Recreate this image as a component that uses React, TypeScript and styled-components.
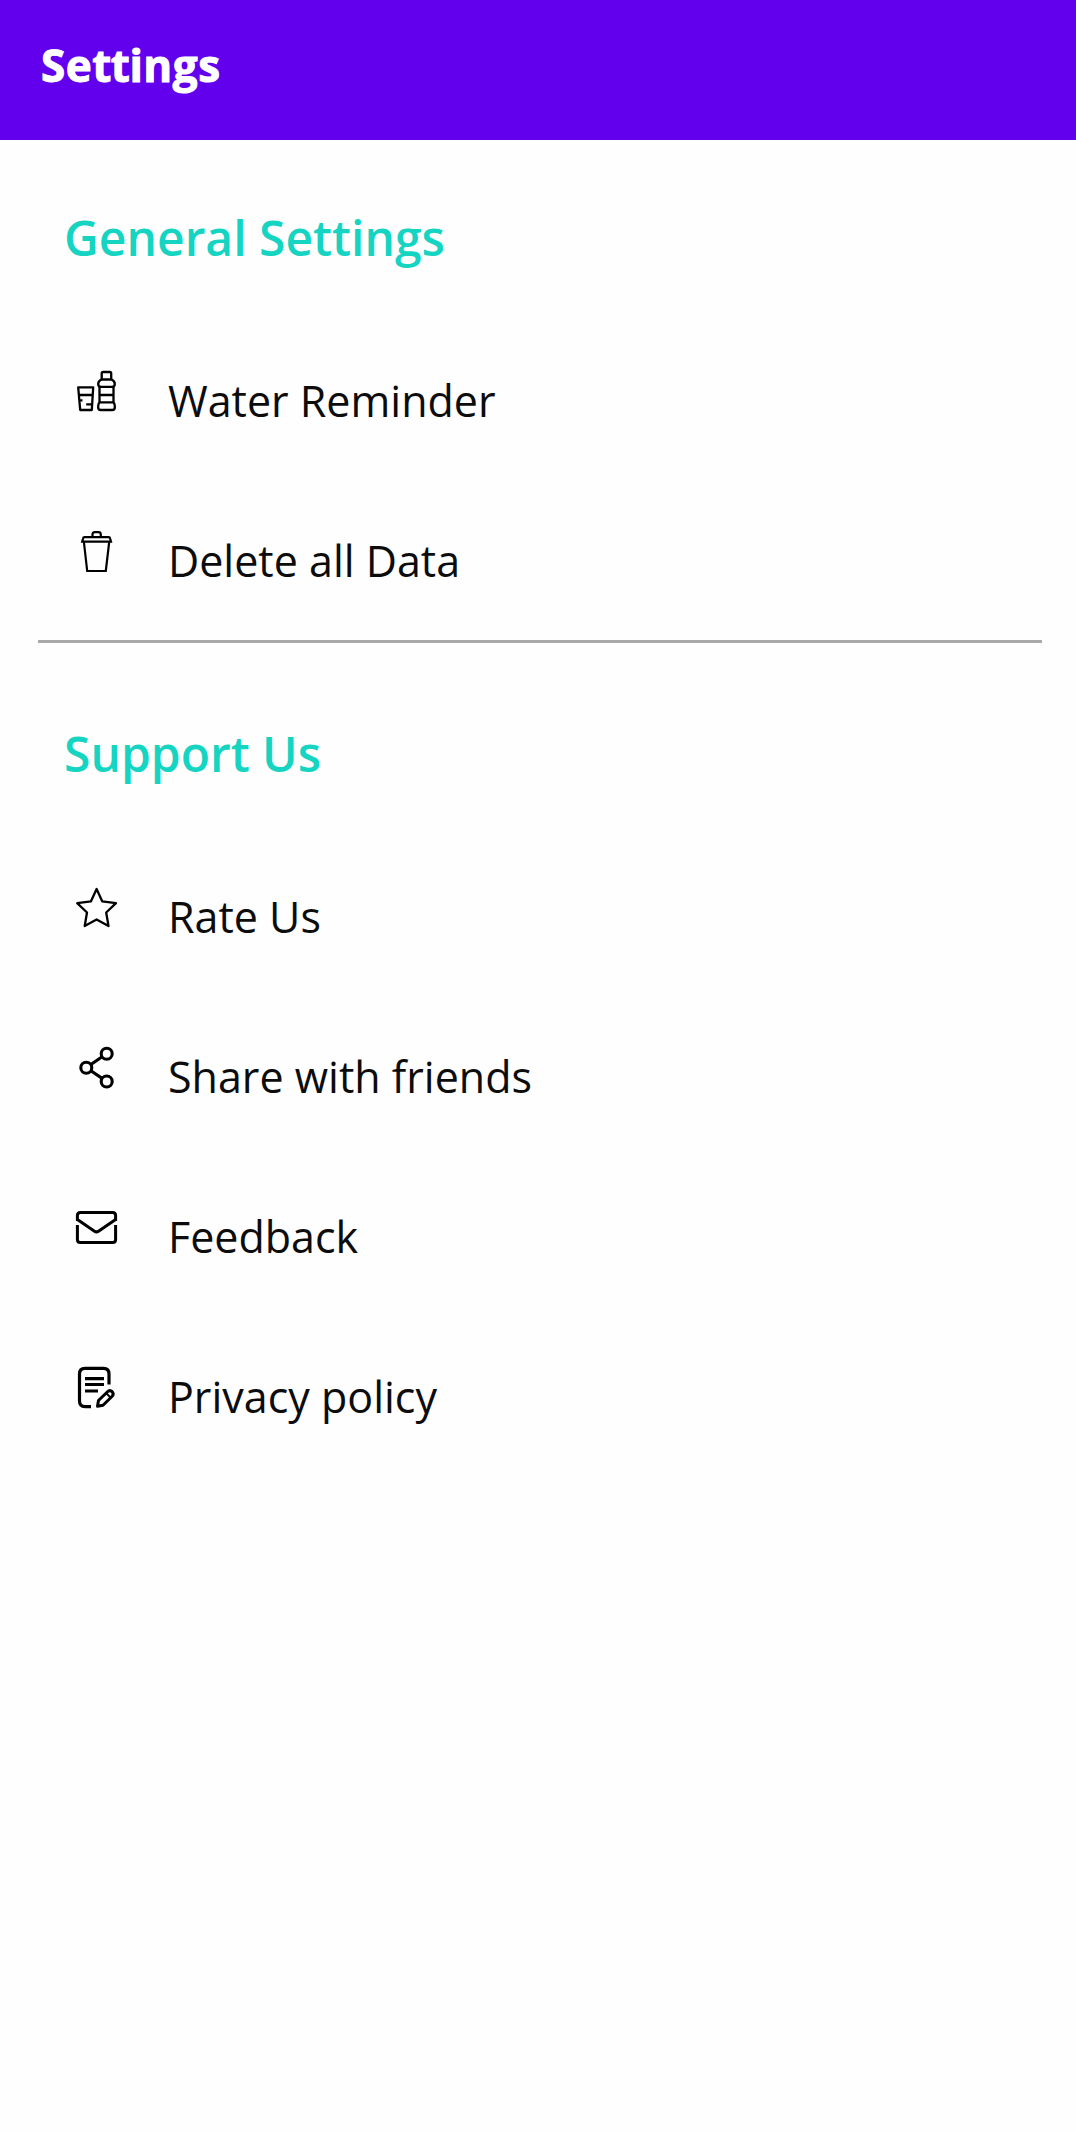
import React from 'react';
import styled, { createGlobalStyle } from 'styled-components';

const GlobalStyle = createGlobalStyle`
  *, *::before, *::after { box-sizing: border-box; }
  body {
    margin: 0;
    background: #fefefe;
    font-family: 'Open Sans', 'Noto Sans', sans-serif;
  }
`;

const Screen = styled.div`
  display: flex;
  flex-direction: column;
  min-height: 2132px;
`;

const AppBar = styled.header`
  display: flex;
  align-items: center;
  height: 140px;
  padding: 0 41px 11px;
  background: #6200ee;
`;

const Title = styled.h1`
  margin: 0;
  color: #fff;
  font-size: 44px;
  font-weight: 700;
  line-height: 60px;
  letter-spacing: 0.5px;
  -webkit-text-stroke: 1px #fff;
`;

const JoinedPair = styled.span`
  letter-spacing: -0.5px;
`;

const SectionTitle = styled.h2`
  height: 172px;
  margin: 0;
  padding: 66px 64px 0;
  color: #15d5c2;
  font-size: 48px;
  font-weight: 600;
  line-height: 64px;
`;

const List = styled.ul`
  margin: 0;
  padding: 0;
  list-style: none;
`;

const Row = styled.li`
  display: flex;
  align-items: flex-start;
  gap: 47px;
  height: 160px;
  padding: 56px 73px 0;
`;

const Icon = styled.svg`
  flex: none;
  width: 48px;
  height: 48px;
  fill: none;
  stroke: #000;
`;

const Label = styled.span`
  margin-top: 3px;
  color: #0c0c0c;
  font-size: 43px;
  line-height: 60px;
  white-space: nowrap;
`;

const Divider = styled.hr`
  width: 1004px;
  height: 3px;
  margin: 8px 0 13px 38px;
  border: 0;
  background: #a9a9a9;
`;

const WaterIcon = () => (
  <Icon viewBox="0 0 48 48" strokeWidth="2.3" strokeLinejoin="round">
    <path d="M5.2 19.3H20.2L18.8 42H7.2ZM5.8 27H19.8M7.5 32.3H9.5M13.2 36.3H18.5" />
    <path d="M28.7 12V5.5Q28.7 4 30.2 4H36.8Q38.2 4 38.2 5.5V12" />
    <path d="M28.5 11.5H38.5C40.8 12.5 41.8 14.3 41.8 16C41.8 18 40.8 18.8 39 18.8H28C26 18.8 25.2 18 25.2 16C25.2 14.3 26.2 12.5 28.5 11.5Z" />
    <path d="M26.5 19V35M40.5 19V35M26.5 27H40.5" />
    <path d="M27 34.3C25.5 35 25.2 36.5 25.2 38V39.5Q25.2 42 27.7 42H39.3Q41.8 42 41.8 39.5V38C41.8 36.5 41.5 35 40 34.3Z" />
  </Icon>
);

const TrashIcon = () => (
  <Icon viewBox="0 0 48 48" strokeWidth="2.2">
    <path d="M11.7 9.2H35.5Q37 9.2 37.2 10.7L38 13.6H9.2L10 10.7Q10.2 9.2 11.7 9.2Z" />
    <path d="M19.5 9V6.5Q19.5 4.2 21.8 4.2H25.5Q27.8 4.2 27.8 6.5V9" />
    <path d="M10.9 14L14.2 43H32.8L36.2 14" />
  </Icon>
);

const StarIcon = () => (
  <Icon viewBox="0 0 48 48" strokeWidth="2.3" strokeLinejoin="round">
    <path d="M23.6 5L29.2 17.3L43 19.2L33.2 28.5L35.5 42L23.6 35.5L11.7 42L14 28.5L4.2 19.2L18 17.3Z" />
  </Icon>
);

const ShareIcon = () => (
  <Icon viewBox="0 0 48 48" strokeWidth="3.1">
    <circle cx="33.7" cy="9.7" r="5.5" />
    <circle cx="13.3" cy="23.7" r="5.5" />
    <circle cx="33.7" cy="37.5" r="5.5" />
    <path d="M17.9 20.6L29.1 12.8M17.9 26.8L29.1 34.4" />
  </Icon>
);

const MailIcon = () => (
  <Icon viewBox="0 0 48 48" strokeWidth="3" strokeLinejoin="round">
    <path d="M4.4 21V35.5Q4.4 38.5 7.4 38.5H39.6Q42.6 38.5 42.6 35.5V21" />
    <path d="M4.4 17V11.4Q4.4 8.4 7.4 8.4H39.6Q42.6 8.4 42.6 11.4V17M4.4 15.5L21.5 27.2Q23.5 28.6 25.5 27.2L42.6 15.5" />
  </Icon>
);

const PolicyIcon = () => (
  <Icon viewBox="0 0 48 48" strokeWidth="3.2" strokeLinejoin="round">
    <path d="M18 42.6H12Q6.5 42.6 6.5 37V10Q6.5 4.4 12 4.4H30.5Q36 4.4 36 10V20.5" />
    <path d="M12 14.6H31M12 20.5H31M12 27H25" />
    <path d="M24.5 42.3L25.5 36.5L34.5 27.7Q36.8 25.5 39.2 27.7Q41.2 30 39.2 32.2L30 41.2Z" strokeWidth="3" />
    <path d="M33.5 29.5L37.5 33.5" strokeWidth="2" />
  </Icon>
);

interface Item {
  label: string;
  Glyph: React.FC;
}

const general: Item[] = [
  { label: 'Water Reminder', Glyph: WaterIcon },
  { label: 'Delete all Data', Glyph: TrashIcon },
];

const support: Item[] = [
  { label: 'Rate Us', Glyph: StarIcon },
  { label: 'Share with friends', Glyph: ShareIcon },
  { label: 'Feedback', Glyph: MailIcon },
  { label: 'Privacy policy', Glyph: PolicyIcon },
];

const Section = ({ title, items }: { title: string; items: Item[] }) => (
  <section>
    <SectionTitle>{title}</SectionTitle>
    <List>
      {items.map(({ label, Glyph }) => (
        <Row key={label}>
          <Glyph />
          <Label>{label}</Label>
        </Row>
      ))}
    </List>
  </section>
);

export default function App() {
  return (
    <>
      <GlobalStyle />
      <Screen>
        <AppBar>
          <Title>
            Se<JoinedPair>tt</JoinedPair>ings
          </Title>
        </AppBar>
        <Section title="General Settings" items={general} />
        <Divider />
        <Section title="Support Us" items={support} />
      </Screen>
    </>
  );
}
